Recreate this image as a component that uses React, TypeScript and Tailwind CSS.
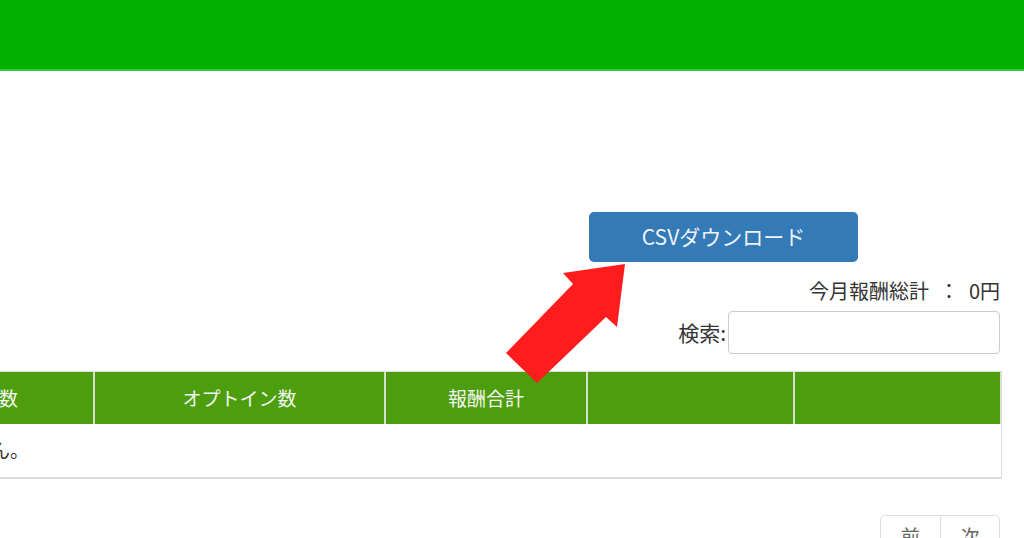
const jp = "font-['Noto_Sans_CJK_JP','Noto_Sans',sans-serif]";

const columns = [
  { label: "No", width: "w-[38px]" },
  { label: "登録者数", width: "w-[228px]" },
  { label: "オプトイン数", width: "w-[291px]" },
  { label: "報酬合計", width: "w-[202px]" },
  { label: "", width: "w-[207px]" },
  { label: "", width: "w-[207px]" },
];

function Arrow() {
  return (
    <svg
      className="pointer-events-none absolute left-0 top-0 z-10"
      width="1024"
      height="538"
      viewBox="0 0 1024 538"
    >
      <polygon
        points="625,264 563,273 573,284 506,353 537,383 606,317 617,327"
        fill="#ff1c1c"
      />
    </svg>
  );
}

export default function App() {
  return (
    <div className={`relative h-[538px] w-[1024px] overflow-hidden bg-white ${jp}`}>
      <header className="h-[71px] border-b-2 border-[#35c935] bg-[#00b100]" />

      <div className="flex flex-col items-end pr-[24px]">
        <button className="mr-[142px] mt-[141px] h-[50px] w-[269px] rounded-[5px] bg-[#337ab7] text-[21px] text-[#eef3f8]">
          CSVダウンロード
        </button>

        <div className="mt-[14px] h-[30px] text-[20px] leading-[30px] text-[#333]">
          今月報酬総計<span className="mx-[10px]">：</span>0円
        </div>

        <label className="mt-[5px] flex items-center gap-[2px] text-[21px] text-[#333]">
          検索:
          <input className="h-[43px] w-[272px] rounded-[4px] border border-[#cccccc] bg-white px-2 outline-none" />
        </label>
      </div>

      <div className="ml-[-173px] mt-[17px] w-[1173px]">
        <table className="w-[1173px] table-fixed border-collapse border border-[#dddddd]">
          <colgroup>
            {columns.map((c, i) => (
              <col key={i} className={c.width} />
            ))}
          </colgroup>
          <thead>
            <tr className="h-[52px] bg-[#4d9e0e]">
              {columns.map((c, i) => (
                <th
                  key={i}
                  className="border-x-2 border-[#d8dfd2] text-center text-[19px] font-normal text-[#f2f7ee]"
                >
                  {c.label}
                </th>
              ))}
            </tr>
          </thead>
          <tbody>
            <tr className="h-[54px] border-b-2 border-[#dddddd]">
              <td colSpan={6} className="px-[11px] text-left text-[19px] text-[#333]">
                データはありません。
              </td>
            </tr>
          </tbody>
        </table>
      </div>

      <div className="flex justify-end pr-[24px]">
        <div className="mt-[36px] flex h-[44px] overflow-hidden rounded-l-[5px] rounded-r-[5px] border border-[#dddddd] text-[19px] text-[#666]">
          <span className="flex w-[59px] justify-center pt-[6px]">前</span>
          <span className="flex w-[59px] justify-center border-l border-[#dddddd] pt-[6px]">次</span>
        </div>
      </div>

      <Arrow />
    </div>
  );
}
